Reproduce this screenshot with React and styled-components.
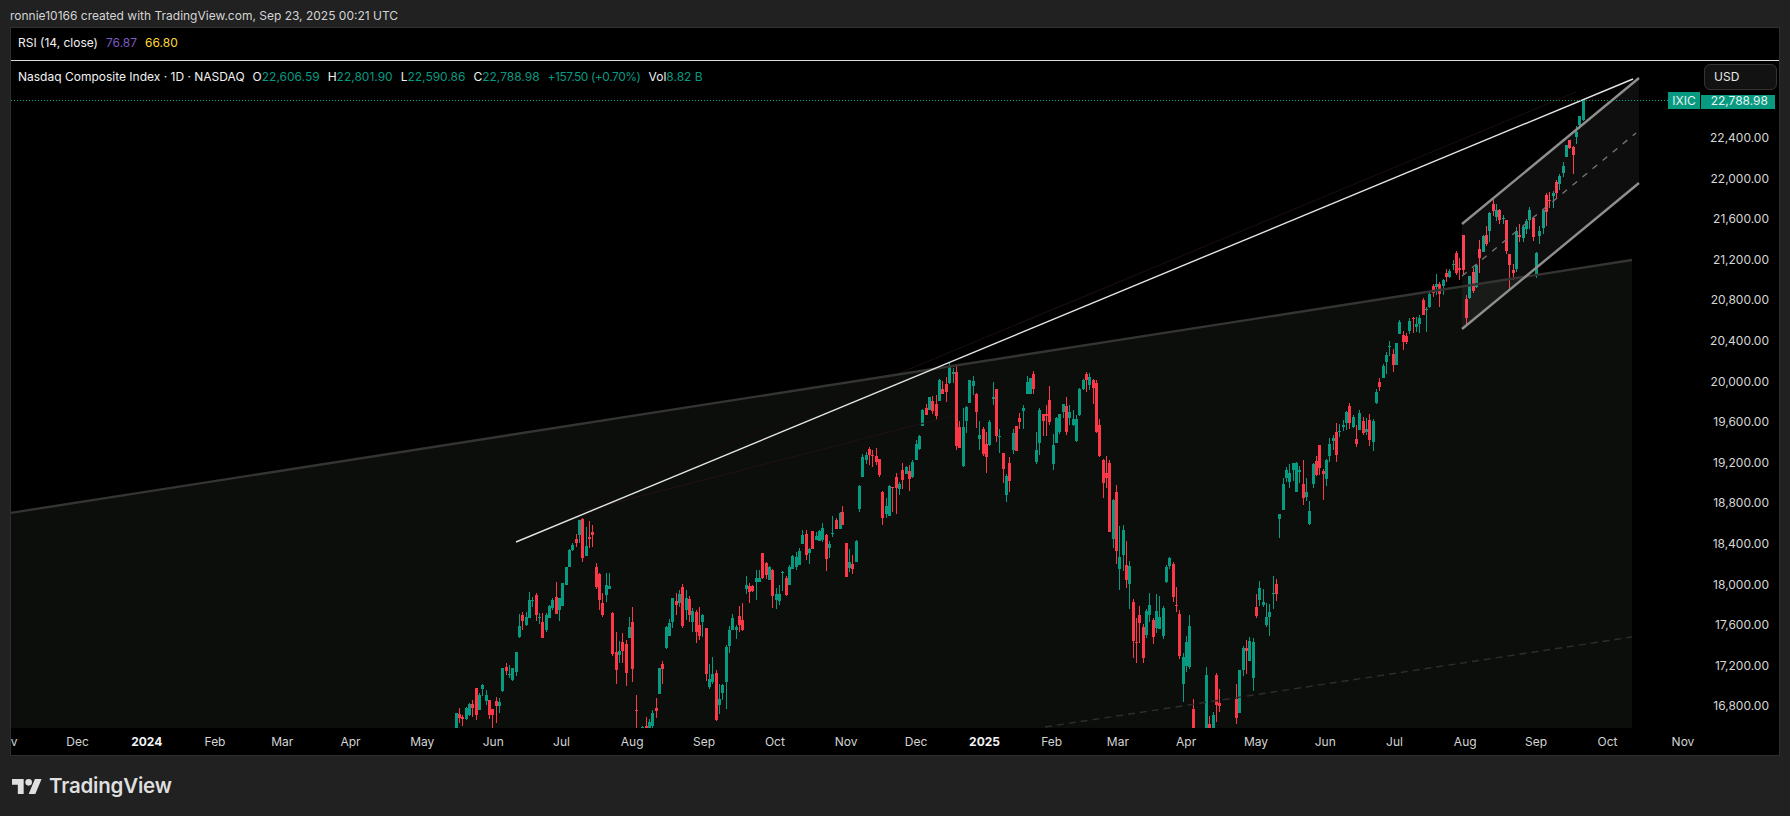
import React from "react";
import styled, { createGlobalStyle } from "styled-components";

const GREEN = "#089981";
const RED = "#fb3748";

const Global = createGlobalStyle`
  html, body { margin: 0; padding: 0; background: #212121; }
  body { font-family: Inter, "Liberation Sans", sans-serif; overflow: hidden; }
`;

const Page = styled.div`
  width: 1790px;
  height: 816px;
  display: flex;
  flex-direction: column;
  background: #212121;
`;
const Credit = styled.div`
  height: 27px;
  padding: 8px 0 0 10px;
  box-sizing: border-box;
  font-size: 12px;
  line-height: 15px;
  color: #d4d4d4;
`;
const Frame = styled.div`
  width: 1770px;
  height: 729px;
  margin-left: 10px;
  box-sizing: border-box;
  border: 1px solid #2f2f2f;
  background: #000;
  display: flex;
  flex-direction: column;
`;
const RsiPane = styled.div`
  height: 33px;
  flex: none;
  box-sizing: border-box;
  border-bottom: 1px solid #dcdcdc;
  padding: 0 0 3px 7px;
  display: flex;
  align-items: center;
  gap: 8px;
  font-size: 12px;
`;
const LegendTitle = styled.span`
  color: #f2f2f2;
`;
const Value = styled.span`
  color: ${(p) => p.$color};
`;
const ChangeValue = styled.span`
  color: ${GREEN};
  letter-spacing: -0.45px;
`;
const MainRow = styled.div`
  height: 667px;
  flex: none;
  display: flex;
`;
const Plot = styled.div`
  position: relative;
  flex: none;
  width: 1657px;
  height: 667px;
`;
const PlotSvg = styled.svg`
  display: block;
`;
const Legend = styled.div`
  position: absolute;
  left: 7px;
  top: 8px;
  display: flex;
  align-items: center;
  gap: 8px;
  font-size: 12px;
  line-height: 16px;
  white-space: nowrap;
`;
const Ohlc = styled.span`
  color: #f2f2f2;
`;
const PriceAxis = styled.div`
  position: relative;
  flex: 1;
  display: flex;
  flex-direction: column;
  align-items: flex-end;
  padding: 57px 10px 0 0;
  box-sizing: border-box;
`;
const PriceLabel = styled.div`
  height: 40.6px;
  line-height: 40.6px;
  flex: none;
  font-size: 12px;
  color: #d6d6d6;
`;
const UsdBox = styled.div`
  position: absolute;
  left: 36px;
  top: 3px;
  width: 73px;
  height: 26px;
  box-sizing: border-box;
  border: 1px solid #333;
  border-radius: 6px;
  background: #121212;
  color: #e8e8e8;
  font-size: 12px;
  line-height: 24px;
  padding-left: 9px;
`;
const SymbolTag = styled.div`
  position: absolute;
  left: 0;
  top: 31px;
  height: 17px;
  width: 32px;
  background: ${GREEN};
  color: #e6f3f0;
  font-size: 12px;
  line-height: 17px;
  text-align: center;
`;
const PriceTag = styled.div`
  position: absolute;
  left: 33px;
  top: 34px;
  width: 74px;
  height: 14px;
  padding-right: 7px;
  box-sizing: border-box;
  background: ${GREEN};
  color: #e6f3f0;
  font-size: 12px;
  line-height: 11px;
  text-align: right;
`;
const TimeAxis = styled.div`
  flex: 1;
  display: flex;
  overflow: hidden;
  align-items: center;
  box-sizing: border-box;
`;
const TimeLabel = styled.div`
  flex: none;
  text-align: center;
  white-space: nowrap;
  font-size: 12px;
  color: ${(p) => (p.$strong ? "#f4f4f4" : "#d4d4d4")};
  font-weight: ${(p) => (p.$strong ? 700 : 400)};
`;
const Footer = styled.div`
  flex: 1;
  display: flex;
  align-items: center;
  gap: 7px;
  padding: 0 0 0 12px;
  color: #dfdfdf;
`;
const LogoMark = styled.svg`
  display: block;
  flex: none;
`;
const LogoText = styled.span`
  font-size: 20.5px;
  font-weight: 600;
  letter-spacing: -0.2px;
  line-height: 24px;
`;

const parse = (x0, y0, txt) =>
  txt
    .trim()
    .split(/\s*,\s*/)
    .map((s) => {
      const [x, c, a, b, t, w] = s.trim().split(/\s+/);
      return {
        x: x0 + +x / 3,
        up: c === "g",
        bt: y0 + +a / 3,
        bb: y0 + +b / 3,
        wt: y0 + +t / 3,
        wb: y0 + +w / 3,
      };
    });

const CANDLES = [
  ...parse(440, 500, `49 g 640 684 640 684,58 r 643 655 625 670,67 r 650 658 645 678,79 g 625 657 620 660,88 g 613 645 610 650,97 r 612 625 600 650,109 r 565 645 565 660,118 g 585 630 578 630,127 g 555 568 552 588,139 g 585 603 570 615,148 r 600 645 600 656,157 r 628 645 628 684,169 r 603 618 590 668,178 g 606 618 595 640,187 g 504 574 504 576,199 r 502 514 490 525,208 g 522 524 495 535,217 g 504 541 504 544,229 g 456 516 456 528,238 g 378 411 342 414,247 r 345 363 337 390,259 g 351 375 336 378,268 g 300 354 276 354,277 g 299 302 290 320,289 r 285 345 278 362,298 g 351 353 338 370,307 r 366 414 340 414,319 g 345 390 338 394,328 g 318 354 315 354,337 g 300 324 294 330,349 r 292 342 246 342,358 g 294 330 294 363,367 g 249 318 249 318,379 g 201 255 201 255,388 g 150 201 147 201,397 g 135 150 130 153,409 r 117 129 102 141,418 g 60 105 60 130,427 r 57 174 55 186,439 g 138 168 80 168,448 r 111 117 64 145,457 r 96 105 75 141,469 r 201 262 190 268,478 r 222 300 219 330,487 r 309 345 280 351,499 g 255 285 220 306,508 g 258 267 220 267,517 r 339 462 336 468,529 r 456 510 396 552,538 g 453 465 423 489,547 r 426 453 400 489,559 r 432 519 420 558,568 g 381 414 351 414,577 r 366 507 321 546,589 r 630 633 585 684,607 g 680 684 678 684,619 r 678 684 651 684,628 g 666 684 657 684,637 g 639 678 630 684,649 r 624 633 594 654,658 g 504 582 504 582,667 r 492 507 483 552,679 g 381 444 378 447,688 g 369 408 357 408,697 g 294 366 294 384,709 r 303 315 280 345,718 g 282 309 270 321,727 r 261 378 252 384,739 g 294 330 270 360,748 r 297 345 288 366,757 g 333 366 324 396,769 r 336 396 330 429,778 r 375 408 321 420,787 g 345 366 342 411,799 r 384 522 384 543,808 g 537 561 492 567,817 g 522 546 471 552,829 r 519 660 510 663,838 g 597 615 552 642,847 g 555 579 552 600,859 g 441 546 435 627,868 g 390 438 378 459,877 g 354 390 342 390,889 g 380 390 375 417,898 r 348 375 318 396,907 r 360 390 309 393,919 g 255 267 228 282,928 r 258 276 250 309,937 r 258 273 255 276,949 g 234 246 210 300,958 g 234 246 210 245,967 r 159 234 159 237,979 r 189 225 186 237,988 g 201 240 198 240,997 r 210 288 207 324,1009 g 282 300 264 327,1018 g 282 303 255 315,1027 g 215 218 212 273,1039 r 234 285 228 288,1048 g 201 255 195 255,1057 g 168 207 165 207,1069 g 171 201 156 210,1078 g 153 195 144 195,1087 g 105 132 90 132,1099 r 102 165 90 180,1108 g 147 159 144 192,1117 r 93 147 93 147,1129 g 108 120 96 120,1138 g 93 123 90 123,1147 g 84 120 69 126,1159 r 105 177 102 213,1168 g 132 144 123 174,1177 g 99 102 48 111,1189 r 60 87 54 87`),
  ...parse(840, 350, `0 g 490 537 487 537,7 r 486 525 468 525,19 r 579 681 579 681,28 g 636 654 597 666,37 r 642 657 615 672,49 g 573 636 570 636,58 g 408 477 405 486,67 g 321 381 312 381,79 g 315 330 306 342,88 r 297 315 291 345,97 r 315 318 300 351,109 r 318 336 294 345,118 r 327 375 327 381,127 r 426 504 423 525,139 g 468 492 444 504,148 g 408 498 405 498,157 r 411 414 411 486,169 r 381 414 369 492,178 g 402 417 396 435,187 r 360 390 339 417,199 g 351 372 348 372,208 r 363 387 345 423,217 g 336 381 330 384,229 g 282 330 270 330,238 g 258 297 255 300,247 g 180 228 177 228,259 r 174 195 162 195,268 g 141 180 141 180,277 r 153 183 138 192,289 r 162 198 135 210,298 g 90 153 87 153,307 r 117 132 93 132,319 r 102 126 81 156,328 g 48 99 36 102,340 g 67 72 54 99,349 r 66 288 45 300,358 r 231 294 213 294,370 g 231 348 174 351,379 g 171 213 168 249,388 g 90 159 90 159,400 g 93 108 78 135,409 r 132 186 129 234,418 g 255 267 213 300,430 r 237 312 231 318,439 r 282 321 246 369,448 g 216 285 210 288,460 g 141 147 96 165,469 r 117 258 117 276,478 g 258 261 237 309,490 r 309 357 309 399,499 g 378 435 372 456,508 r 339 393 321 426,520 g 249 300 237 312,529 r 228 303 228 303,538 r 204 216 189 237,550 g 174 183 165 237,562 g 96 132 78 132,571 g 84 132 84 132,580 r 72 117 63 132,589 g 300 336 246 342,598 g 180 279 174 315,610 r 192 213 192 258,619 r 192 198 165 258,628 r 150 216 108 225,640 g 285 342 252 360,649 g 204 279 201 279,658 g 192 246 192 252,670 g 162 186 162 204,679 r 168 246 141 255,688 g 186 204 165 225,700 g 207 225 180 228,709 g 207 273 195 276,718 g 117 195 114 198,730 g 90 117 87 120,739 r 72 90 66 126,748 g 81 105 69 120,760 r 90 114 87 162,769 r 99 246 90 249,778 r 225 318 207 321,790 r 330 399 327 444,799 r 369 384 318 414,808 r 339 546 330 546,820 g 450 567 447 594,829 r 426 603 405 642,838 g 621 657 528 720,850 g 540 615 525 663,859 r 645 690 573 714,868 g 648 702 633 777`),
  ...parse(1100, 500, `100 r 306 423 297 474,109 r 426 429 354 489,118 r 345 369 318 429,130 r 381 474 372 489,139 g 333 405 327 414,148 g 315 345 279 366,160 r 360 411 354 432,169 g 333 384 282 399,178 g 351 387 288 387,190 g 324 408 318 417,199 g 201 246 195 249,208 g 174 198 171 207,220 r 192 291 186 306,229 r 315 318 261 336,238 r 342 468 330 477,250 g 471 552 459 606,259 g 426 498 408 516,268 g 378 501 345 507,280 r 627 684 597 684,319 g 525 684 501 684,328 r 672 684 648 684,340 g 645 684 636 684,349 r 525 615 519 666,358 r 609 618 567 636,409 r 597 654 552 672,418 g 510 639 510 639,430 g 444 510 438 528,439 r 444 453 420 522,448 g 423 483 411 483,460 g 426 534 414 573,469 r 321 348 282 354,478 g 264 300 243 318,490 g 306 315 267 321,499 g 351 375 309 381,508 g 336 351 312 408,520 g 279 282 228 327,529 r 252 282 237 303`),
  ...parse(1240, 360, `118 g 462 477 462 534,130 g 372 450 354 450,139 g 330 354 321 366,148 g 339 366 312 384,160 g 309 330 309 363,169 g 309 396 306 396,178 g 330 336 318 369,190 r 372 414 300 435,199 g 396 411 354 423,208 g 453 492 423 495,220 g 312 372 309 384,229 r 303 345 288 348,238 r 255 324 255 345,250 r 333 342 327 420,259 g 300 357 297 378,268 g 252 288 234 306,280 g 234 243 225 270,289 r 216 285 189 306,298 g 213 215 192 231,310 g 195 201 180 213,319 g 156 189 153 210,328 r 138 189 129 207,340 g 171 201 165 204,349 r 237 252 195 261,358 g 159 210 150 210,370 r 183 219 171 225,379 g 207 216 174 225,388 r 180 240 162 258,400 g 183 246 177 273,409 g 96 129 87 132,418 r 66 81 54 93`),
  ...parse(1300, 180, `250 g 558 594 552 594,259 g 525 546 516 582,268 g 498 500 483 528,280 r 522 555 507 576,289 g 489 555 489 555,298 g 426 462 420 462,310 r 465 486 453 510,319 r 468 486 459 492,328 g 423 453 414 462,340 r 415 417 411 459,349 g 432 441 411 456,358 g 414 432 405 459,370 r 360 405 354 405,379 g 387 390 381 456,388 g 342 381 336 384,400 r 318 339 312 351,409 g 312 320 282 345,418 r 312 342 306 381,430 g 300 318 297 345,439 r 279 291 267 306,448 g 273 291 267 294,460 g 252 254 240 270,469 r 219 279 213 285,478 r 264 270 234 300,490 r 165 270 165 282,499 r 357 414 345 438,508 g 288 354 288 357,520 r 276 333 264 339,529 g 255 321 255 324,538 r 207 234 180 279,550 g 168 216 165 216,559 r 165 192 138 198,568 g 99 153 96 186,580 r 72 93 57 108,589 g 90 111 72 123,598 r 90 120 87 132,610 g 114 118 105 132,619 r 120 213 120 222,628 r 222 255 222 330,640 r 270 279 252 300,649 g 153 267 141 276,658 r 165 171 132 186,670 g 141 174 135 186,679 g 123 147 117 162,688 g 90 120 81 147,700 r 114 171 114 183,709 g 219 282 216 294,718 g 153 168 138 192,730 g 90 144 90 162,739 r 45 96 39 138,748 r 60 62 36 84,760 g 39 48 33 84`),
  ...parse(1400, 50, `469 r 396 429 390 447,478 g 378 402 372 420,490 g 348 369 336 381,499 g 285 321 285 321,508 r 270 294 270 297,520 r 291 315 288 372,529 g 246 261 228 282,538 g 198 225 198 237,550 g 150 210 147 213`),
];

const Candle = ({ c }) => {
  const left = Math.round(c.x - 1.5);
  const top = Math.round(c.bt);
  const fill = c.up ? GREEN : RED;
  return (
    <g fill={fill}>
      <rect x={left + 1} y={Math.round(c.wt)} width={1} height={Math.max(1, Math.round(c.wb - c.wt))} />
      <rect x={left} y={top} width={3} height={Math.max(1, Math.round(c.bb) - top)} />
    </g>
  );
};

const Drawings = () => (
  <>
    <line x1="580" y1="506" x2="1576" y2="92" stroke="#170c0e" strokeWidth="1.2" />
    <line x1="579" y1="512" x2="955" y2="415" stroke="#1e1213" strokeWidth="1.2" />
    <polygon points="1462,224 1639,78 1639,183 1462,329" fill="#fff" fillOpacity="0.055" />
    <line x1="1045" y1="727" x2="1632" y2="637" stroke="#2d2f2d" strokeWidth="1.4" strokeDasharray="7 5" />
    <line x1="10" y1="513" x2="1632" y2="260" stroke="#343432" strokeWidth="2.4" />
    <line x1="1462" y1="276" x2="1636" y2="133" stroke="#777" strokeWidth="1.3" strokeDasharray="6 7" />
    <line x1="1462" y1="224" x2="1639" y2="78" stroke="#8e8e8c" strokeWidth="2.4" />
    <line x1="1462" y1="329" x2="1639" y2="183" stroke="#8e8e8c" strokeWidth="2.4" />
    <line x1="516" y1="542" x2="1633" y2="79" stroke="#e4e4e4" strokeWidth="1.4" />
  </>
);

const ChartDrawing = () => (
  <PlotSvg viewBox="11 61 1657 667" width="1657" height="667">
    <polygon points="10,513 1632,260 1632,728 10,728" fill="#0c0e0c" />
    <g shapeRendering="crispEdges">
      {CANDLES.map((c, i) => (
        <Candle key={i} c={c} />
      ))}
    </g>
    <Drawings />
    <line
      x1="11"
      y1="100.5"
      x2="1668"
      y2="100.5"
      stroke="#0aa88e"
      strokeWidth="1"
      strokeDasharray="1 2"
      shapeRendering="crispEdges"
    />
  </PlotSvg>
);

const PRICES = [];
for (let p = 22400; p >= 16800; p -= 400) {
  PRICES.push(p.toLocaleString("en-US", { minimumFractionDigits: 2 }));
}

const MONTHS = [
  ["Nov", 6], ["Dec", 79], ["2024", 146, true], ["Feb", 216], ["Mar", 282], ["Apr", 349], ["May", 422],
  ["Jun", 496], ["Jul", 559], ["Aug", 632], ["Sep", 705.5], ["Oct", 773], ["Nov", 848], ["Dec", 915.6],
  ["2025", 985, true], ["Feb", 1052.6], ["Mar", 1116.5], ["Apr", 1186], ["May", 1256], ["Jun", 1326],
  ["Jul", 1393], ["Aug", 1466], ["Sep", 1536], ["Oct", 1606], ["Nov", 1682],
];

const AXIS_LEFT = 11;

const timeCells = () => {
  const mid = (i) => (MONTHS[i][1] + MONTHS[i + 1][1]) / 2;
  return MONTHS.map(([label, center, strong], i) => {
    const right = i < MONTHS.length - 1 ? mid(i) : center + 40;
    const left = i > 0 ? mid(i - 1) : 2 * center - right;
    return { label, strong, width: right - left, offset: i === 0 ? left - AXIS_LEFT : 0 };
  });
};

export default function App() {
  return (
    <Page>
      <Global />
      <Credit>ronnie10166 created with TradingView.com, Sep 23, 2025 00:21 UTC</Credit>
      <Frame>
        <RsiPane>
          <LegendTitle>RSI (14, close)</LegendTitle>
          <Value $color="#7e57c2">76.87</Value>
          <Value $color="#fdd835">66.80</Value>
        </RsiPane>
        <MainRow>
          <Plot>
            <ChartDrawing />
            <Legend>
              <LegendTitle>Nasdaq Composite Index · 1D · NASDAQ</LegendTitle>
              <Ohlc>O<Value $color={GREEN}>22,606.59</Value></Ohlc>
              <Ohlc>H<Value $color={GREEN}>22,801.90</Value></Ohlc>
              <Ohlc>L<Value $color={GREEN}>22,590.86</Value></Ohlc>
              <Ohlc>C<Value $color={GREEN}>22,788.98</Value></Ohlc>
              <ChangeValue>+157.50 (+0.70%)</ChangeValue>
              <Ohlc>Vol<Value $color={GREEN}>8.82 B</Value></Ohlc>
            </Legend>
          </Plot>
          <PriceAxis>
            <UsdBox>USD</UsdBox>
            <SymbolTag>IXIC</SymbolTag>
            <PriceTag>22,788.98</PriceTag>
            {PRICES.map((p) => (
              <PriceLabel key={p}>{p}</PriceLabel>
            ))}
          </PriceAxis>
        </MainRow>
        <TimeAxis>
          {timeCells().map((c, i) => (
            <TimeLabel key={i} $strong={c.strong} style={{ width: c.width, marginLeft: c.offset }}>
              {c.label}
            </TimeLabel>
          ))}
        </TimeAxis>
      </Frame>
      <Footer>
        <LogoMark viewBox="0 4 36 18" width="30" height="15" fill="#dfdfdf">
          <path d="M14 22H7V11H0V4h14v18zM28 22h-8l7.5-18h8L28 22z" />
          <circle cx="20" cy="8" r="4" />
        </LogoMark>
        <LogoText>TradingView</LogoText>
      </Footer>
    </Page>
  );
}
